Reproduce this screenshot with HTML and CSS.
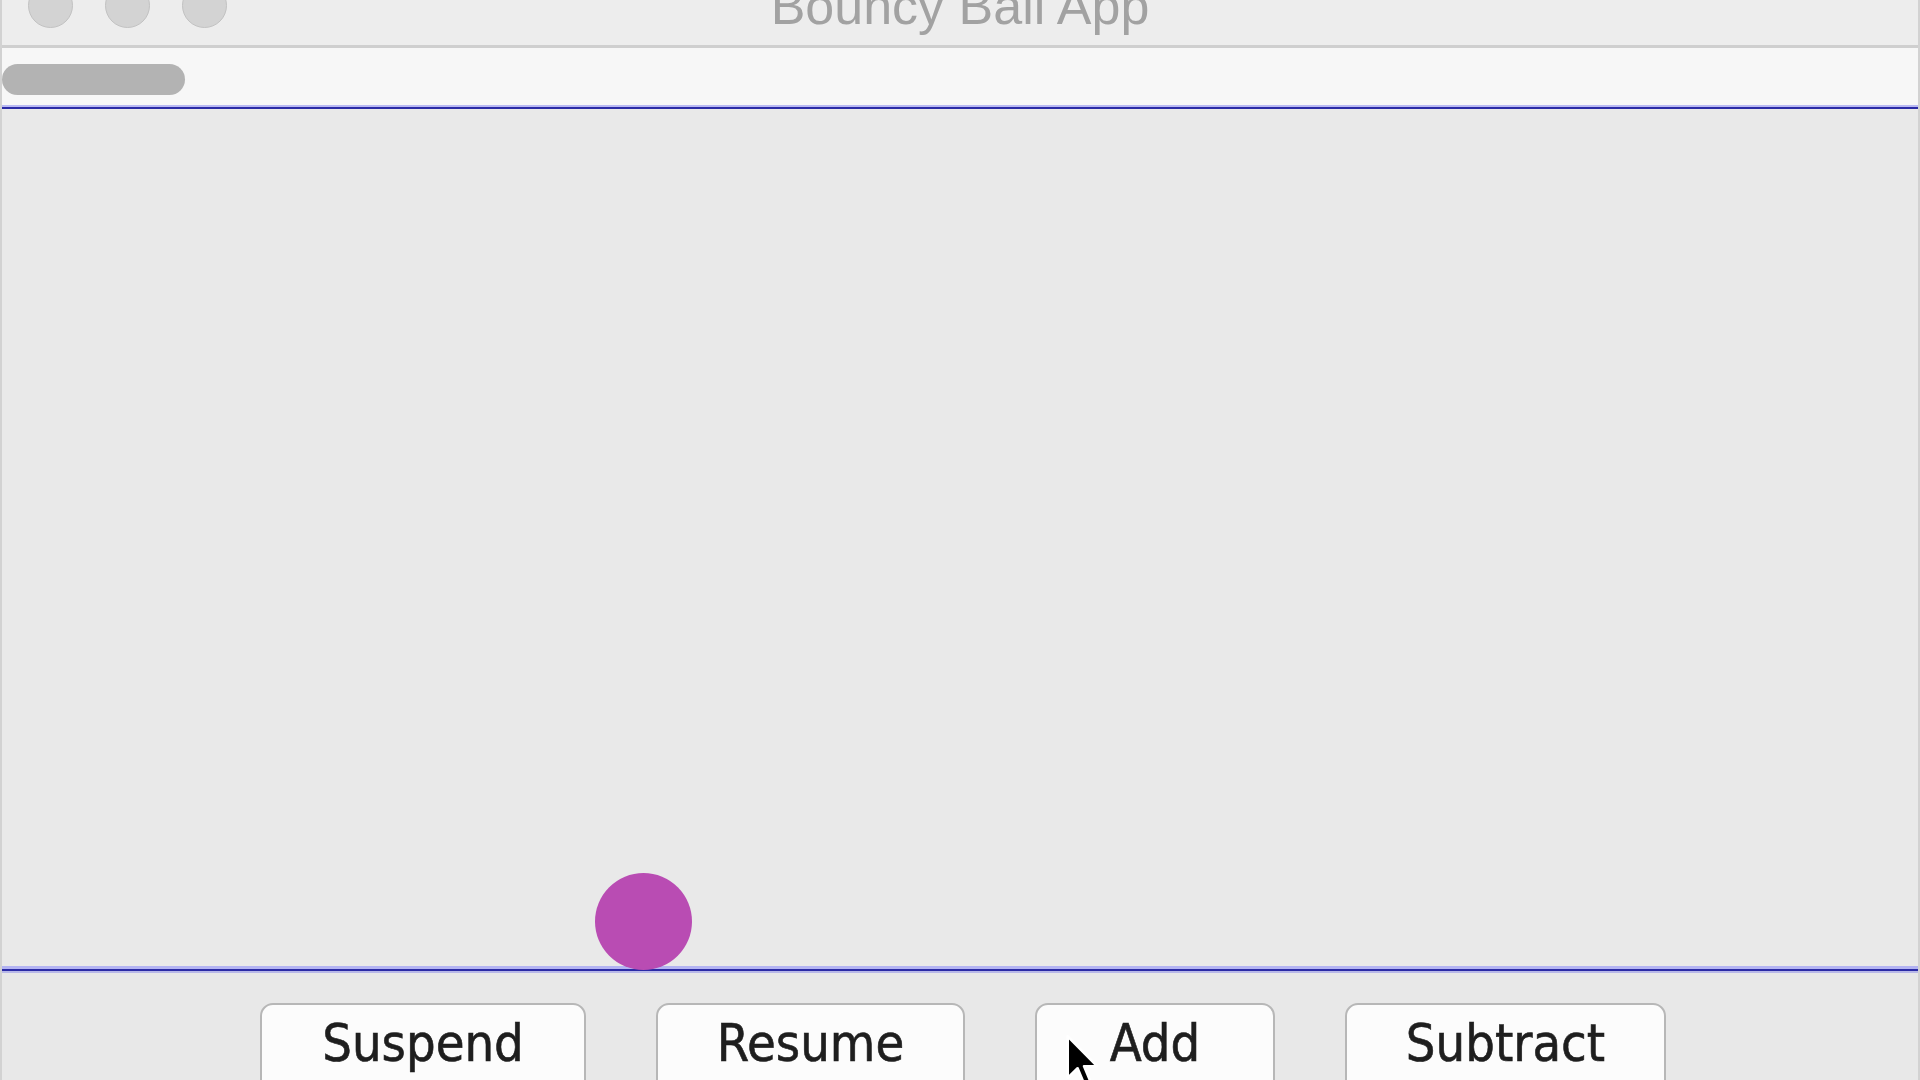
FILE: index.html
```html
<!DOCTYPE html>
<html>
<head>
<meta charset="utf-8">
<title>Bouncy Ball App</title>
<link rel="stylesheet" href="styles.css">
</head>
<body>
<div class="window">
  <header class="titlebar">
    <div class="lights">
      <span class="light"></span>
      <span class="light"></span>
      <span class="light"></span>
    </div>
    <div class="title">Bouncy Ball App</div>
    <div></div>
  </header>
  <div class="toolbar">
    <span class="pill"></span>
  </div>
  <main class="canvas">
    <div class="ball"></div>
  </main>
  <footer class="controls">
    <button class="btn btn-suspend">Suspend</button>
    <button class="btn btn-resume">Resume</button>
    <button class="btn btn-add">Add</button>
    <button class="btn btn-subtract">Subtract</button>
    <svg class="cursor" width="32" height="52" viewBox="0 0 12 20">
      <path d="M0.5 0.5 L0.5 16.5 L4.3 12.8 L6.9 19 L9.3 18 L6.8 12 L11.8 12 Z" fill="#000" stroke="#fff" stroke-width="1" stroke-linejoin="round"/>
    </svg>
  </footer>
</div>
</body>
</html>
```

FILE: styles.css
```css
html, body {
  margin: 0;
  padding: 0;
  width: 1920px;
  height: 1080px;
  overflow: hidden;
  background: #e8e8e8;
}

.window {
  width: 1920px;
  height: 1080px;
  box-sizing: border-box;
  border-left: 2px solid #d2d2d2;
  border-right: 2px solid #d2d2d2;
  display: flex;
  flex-direction: column;
  background: #e8e8e8;
}

.titlebar {
  height: 45px;
  flex: none;
  background: #ededed;
  border-bottom: 3px solid #cfcfcf;
  display: grid;
  grid-template-columns: 1fr auto 1fr;
  align-items: start;
  overflow: hidden;
}

.lights {
  display: flex;
  gap: 32px;
  padding-left: 26px;
  margin-top: -17px;
}

.light {
  width: 43px;
  height: 43px;
  border-radius: 50%;
  background: #d3d3d3;
  border: 1px solid #c2c2c2;
}

.title {
  font-family: "Liberation Sans", Arial, sans-serif;
  font-size: 52px;
  line-height: 52px;
  color: #a2a2a2;
  margin-top: -20px;
  white-space: nowrap;
}

.toolbar {
  height: 61px;
  flex: none;
  background: #f7f7f7;
  border-bottom: 2px solid #2b2ba6;
  box-shadow: 0 2px 0 #a5a5ee, 0 -2px 0 #b9b9f3 inset;
  display: flex;
  align-items: flex-start;
  padding-top: 16px;
  box-sizing: border-box;
  position: relative;
  z-index: 1;
}

.pill {
  display: block;
  width: 183px;
  height: 31px;
  border-radius: 16px;
  background: #b3b3b3;
}

.canvas {
  height: 860px;
  flex: none;
  background: #e9e9e9;
  border-bottom: 2px solid #2b2ba6;
  box-shadow: 0 -3px 0 #b3b3f2 inset, 0 2px 0 #b8b8e8;
  display: flex;
  align-items: flex-end;
  padding-left: 593px;
  box-sizing: content-box;
  position: relative;
  z-index: 1;
}

.ball {
  width: 97px;
  height: 97px;
  border-radius: 50%;
  background: #b94cb3;
  margin-bottom: -1px;
}

.controls {
  flex: 1;
  position: relative;
  display: flex;
  justify-content: center;
  align-items: flex-start;
  gap: 70px;
  padding-top: 32px;
  padding-left: 6px;
  background: #e8e8e8;
}

.btn {
  height: 95px;
  flex: none;
  box-sizing: border-box;
  border: 2px solid #b7b7b7;
  border-radius: 13px;
  background: #fcfcfc;
  font-family: "DejaVu Sans Condensed", "DejaVu Sans", sans-serif;
  font-size: 52px;
  line-height: 52px;
  color: #1e1e1e;
  -webkit-text-stroke: 0.6px #1e1e1e;
  padding: 12px 0 0 0;
  display: flex;
  justify-content: center;
  align-items: flex-start;
  margin: 0;
}

.btn-suspend { width: 326px; }
.btn-resume { width: 309px; }
.btn-add { width: 240px; }
.btn-subtract { width: 321px; }

.cursor {
  position: absolute;
  left: 1064px;
  top: 64px;
}
```
